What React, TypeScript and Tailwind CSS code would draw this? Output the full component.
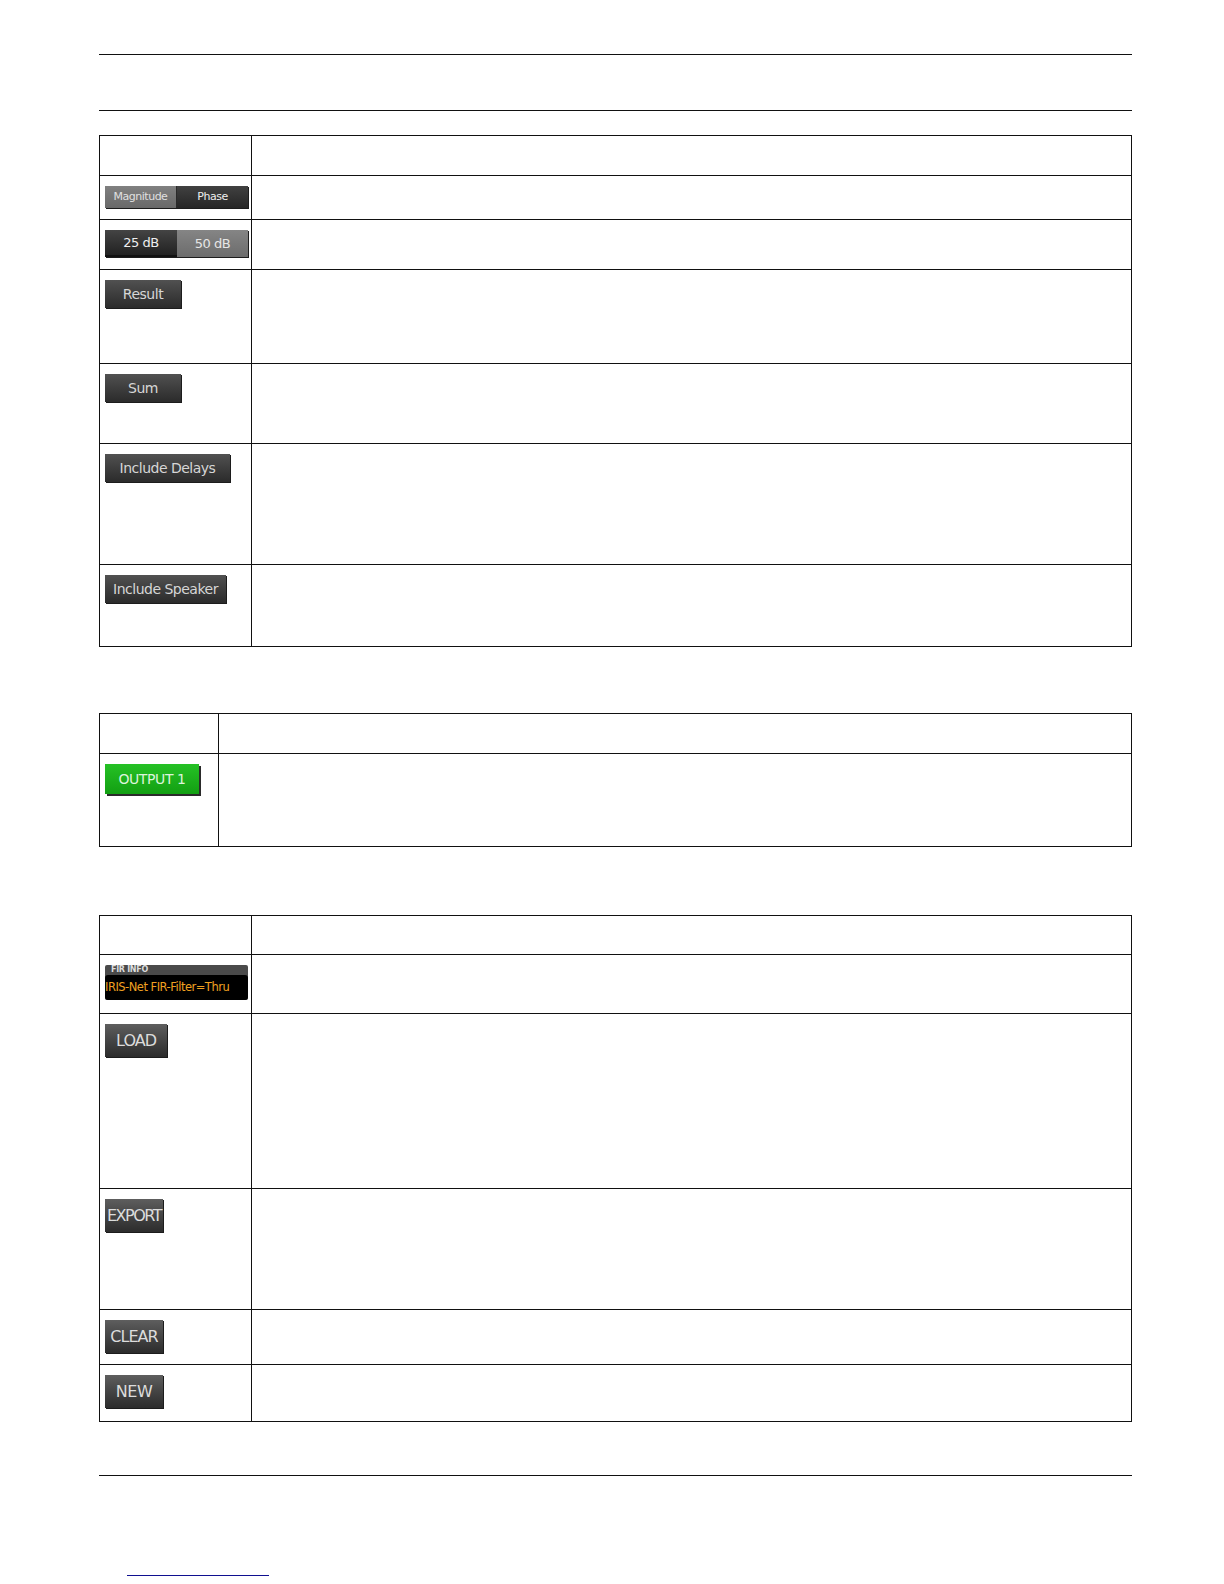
import type { ReactNode } from 'react';

const Rule = () => <div className="border-t border-[#111]" />;

const Row = ({ h, last, left, w = 'w-[152px]', children }: { h: string; last?: boolean; left?: ReactNode; w?: string; children?: ReactNode }) => (
  <div className={`flex ${h} ${last ? '' : 'border-b border-[#111]'}`}>
    <div className={`${w} shrink-0 border-r border-[#111] pl-[5px] pt-[10px]`}>{left}</div>
    <div className="flex-1">{children}</div>
  </div>
);

const DarkBtn = ({ w, label }: { w: string; label: string }) => (
  <div
    className={`${w} h-[28px] flex items-center justify-center bg-gradient-to-b from-[#515151] to-[#2b2b2b] shadow-[1px_1px_0_#1c1c1c] text-[#d6d6d6] text-[14px] tracking-[-0.5px] font-['DejaVu_Sans',sans-serif]`}
  >
    {label}
  </div>
);

const FileBtn = ({ w, label, track }: { w: string; label: string; track: string }) => (
  <div
    className={`${w} h-[33px] flex items-center justify-center overflow-hidden bg-gradient-to-b from-[#5e5e5e] to-[#2c2c2c] shadow-[1px_1px_0_#1c1c1c] text-[#dcdcdc] text-[16px] ${track} font-['DejaVu_Sans',sans-serif]`}
  >
    {label}
  </div>
);

export default function App() {
  return (
    <div className="w-[1224px] h-[1584px] bg-white overflow-hidden">
      <div className="ml-[99px] w-[1033px] pt-[54px]">
        <Rule />
        <div className="h-[55px]" />
        <Rule />

        {/* table 1 */}
        <div className="mt-[24px] border border-[#111]">
          <Row h="h-[40px]" />
          <Row
            h="h-[44px]"
            left={
              <div className="flex w-[143px] h-[22px] shadow-[1px_1px_0_#1c1c1c] text-[11px] tracking-[-0.5px] font-['DejaVu_Sans',sans-serif]">
                <div className="w-[71px] flex items-center justify-center bg-gradient-to-b from-[#808080] to-[#696969] text-[#e0e0e0]">Magnitude</div>
                <div className="flex-1 flex items-center justify-center bg-gradient-to-b from-[#414141] to-[#262626] text-[#eeeeee] border-l border-[#2a2a2a]">Phase</div>
              </div>
            }
          />
          <Row
            h="h-[50px]"
            left={
              <div className="flex w-[143px] h-[27px] shadow-[1px_1px_0_#1c1c1c] text-[13px] tracking-[-0.5px] font-['DejaVu_Sans',sans-serif]">
                <div className="w-[72px] flex items-center justify-center bg-gradient-to-b from-[#444] to-[#222] text-[#eeeeee] border-b-2 border-[#111]">25 dB</div>
                <div className="flex-1 flex items-center justify-center bg-gradient-to-b from-[#858585] to-[#6c6c6c] text-[#e6e6e6]">50 dB</div>
              </div>
            }
          />
          <Row h="h-[94px]" left={<DarkBtn w="w-[76px]" label="Result" />} />
          <Row h="h-[80px]" left={<DarkBtn w="w-[76px]" label="Sum" />} />
          <Row h="h-[121px]" left={<DarkBtn w="w-[125px]" label="Include Delays" />} />
          <Row h="h-[81px]" last left={<DarkBtn w="w-[121px]" label="Include Speaker" />} />
        </div>

        {/* table 2 */}
        <div className="mt-[66px] border border-[#111]">
          <Row h="h-[40px]" w="w-[119px]" />
          <Row
            h="h-[92px]"
            w="w-[119px]"
            last
            left={
              <div className="w-[94px] h-[30px] flex items-center justify-center bg-gradient-to-b from-[#25c125] to-[#129f12] shadow-[2px_2px_0_#2a2a2a] text-[#dcf4dc] text-[14px] tracking-[-0.4px] font-['DejaVu_Sans',sans-serif]">
                OUTPUT 1
              </div>
            }
          />
        </div>

        {/* table 3 */}
        <div className="mt-[68px] border border-[#111]">
          <Row h="h-[39px]" />
          <Row
            h="h-[59px]"
            left={
              <div className="w-[143px] h-[35px] bg-[#4a4a4a] rounded-[2px] flex flex-col">
                <div className="h-[10px] pl-[6px] text-[8px] leading-[10px] font-bold tracking-[-0.3px] text-[#dddddd] font-['DejaVu_Sans',sans-serif]">FIR INFO</div>
                <div className="flex-1 bg-black rounded-[3px] flex items-center text-[11.5px] tracking-[-0.5px] text-[#f0a020] font-['DejaVu_Sans',sans-serif]">
                  IRIS-Net FIR-Filter=Thru
                </div>
              </div>
            }
          />
          <Row h="h-[175px]" left={<FileBtn w="w-[62px]" label="LOAD" track="tracking-[-1px]" />} />
          <Row h="h-[121px]" left={<FileBtn w="w-[58px]" label="EXPORT" track="tracking-[-1.5px]" />} />
          <Row h="h-[55px]" left={<FileBtn w="w-[58px]" label="CLEAR" track="tracking-[-1px]" />} />
          <Row h="h-[56px]" last left={<FileBtn w="w-[58px]" label="NEW" track="tracking-[-0.5px]" />} />
        </div>

        <div className="mt-[53px]">
          <Rule />
        </div>

        <div className="mt-[99px] ml-[28px] w-[142px] border-t border-[#101090]" />
      </div>
    </div>
  );
}
